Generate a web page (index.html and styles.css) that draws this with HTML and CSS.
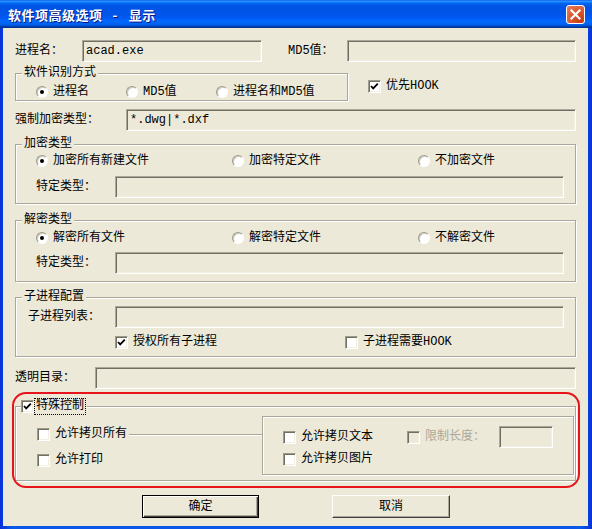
FILE: index.html
```html
<!DOCTYPE html>
<html lang="zh-CN">
<head>
  <meta charset="UTF-8">
  <meta name="viewport" content="width=device-width, initial-scale=1">
  <title>软件项高级选项 - 显示</title>
  <link rel="stylesheet" href="styles.css">
</head>
<body>
  <div class="window">
    <div class="titlebar">
      <span class="title">软件项高级选项<span class="title-sep">-</span>显示</span>
      <button class="close-btn" type="button" aria-label="关闭">
        <svg width="17" height="17" viewBox="0 0 17 17"><path d="M4.5 4.5 L12.5 12.5 M12.5 4.5 L4.5 12.5" stroke="#fff" stroke-width="2.2" stroke-linecap="square"/></svg>
      </button>
    </div>

    <div class="client">
      <div class="row row-proc">
        <label class="lbl w-proc" for="proc">进程名：</label>
        <input class="edit w-proc-edit" id="proc" type="text" value="acad.exe">
        <label class="lbl lbl-md5" for="md5">MD5值：</label>
        <input class="edit grow" id="md5" type="text">
      </div>

      <div class="ident-row">
        <fieldset class="group ident">
          <legend>软件识别方式</legend>
          <div class="group-body ident-body">
            <div class="options">
              <span class="opt w-90"><span class="radio on"></span>进程名</span>
              <span class="opt w-90"><span class="radio"></span>MD5值</span>
              <span class="opt"><span class="radio"></span>进程名和MD5值</span>
            </div>
          </div>
        </fieldset>
        <span class="opt hook"><span class="check"><svg width="11" height="11" viewBox="0 0 11 11"><polyline points="2,5 4.2,7.4 8.8,2.6" fill="none" stroke="#000" stroke-width="1.8"/></svg></span>优先HOOK</span>
      </div>

      <div class="row row-force">
        <label class="lbl w-force" for="force">强制加密类型：</label>
        <input class="edit grow" id="force" type="text" value="*.dwg|*.dxf">
      </div>

      <fieldset class="group enc">
        <legend>加密类型</legend>
        <div class="group-body enc-body">
          <div class="options">
            <span class="opt w-196"><span class="radio on"></span>加密所有新建文件</span>
            <span class="opt w-186"><span class="radio"></span>加密特定文件</span>
            <span class="opt"><span class="radio"></span>不加密文件</span>
          </div>
          <div class="row sub-row enc-sub">
            <label class="lbl w-type">特定类型：</label>
            <input class="edit grow" type="text">
          </div>
        </div>
      </fieldset>

      <fieldset class="group dec">
        <legend>解密类型</legend>
        <div class="group-body dec-body">
          <div class="options">
            <span class="opt w-196"><span class="radio on"></span>解密所有文件</span>
            <span class="opt w-186"><span class="radio"></span>解密特定文件</span>
            <span class="opt"><span class="radio"></span>不解密文件</span>
          </div>
          <div class="row sub-row dec-sub">
            <label class="lbl w-type">特定类型：</label>
            <input class="edit grow" type="text">
          </div>
        </div>
      </fieldset>

      <fieldset class="group child">
        <legend>子进程配置</legend>
        <div class="group-body child-body">
          <div class="row">
            <label class="lbl w-child">子进程列表：</label>
            <input class="edit grow" type="text">
          </div>
          <div class="options child-opts">
            <span class="opt w-230"><span class="check"><svg width="11" height="11" viewBox="0 0 11 11"><polyline points="2,5 4.2,7.4 8.8,2.6" fill="none" stroke="#000" stroke-width="1.8"/></svg></span>授权所有子进程</span>
            <span class="opt"><span class="check"></span>子进程需要HOOK</span>
          </div>
        </div>
      </fieldset>

      <div class="row row-trans">
        <label class="lbl w-trans" for="trans">透明目录：</label>
        <input class="edit grow" id="trans" type="text">
      </div>

      <fieldset class="group special">
        <legend class="check-legend">
          <span class="check"><svg width="11" height="11" viewBox="0 0 11 11"><polyline points="2,5 4.2,7.4 8.8,2.6" fill="none" stroke="#000" stroke-width="1.8"/></svg></span><span class="focus">特殊控制</span>
        </legend>
        <div class="special-body">
          <div class="copy-col">
            <div class="copy-all">
              <span class="opt"><span class="check"></span>允许拷贝所有</span>
              <span class="copy-line"></span>
            </div>
            <span class="opt print"><span class="check"></span>允许打印</span>
          </div>
          <div class="copy-box">
            <div class="row">
              <span class="opt w-124"><span class="check"></span>允许拷贝文本</span>
              <span class="opt w-92 disabled"><span class="check off"></span>限制长度：</span>
              <input class="edit w-len" type="text" disabled>
            </div>
            <div class="options pic-row">
              <span class="opt"><span class="check"></span>允许拷贝图片</span>
            </div>
          </div>
        </div>
      </fieldset>

      <div class="buttons">
        <button class="btn default" type="button">确定</button>
        <button class="btn" type="button">取消</button>
      </div>
    </div>

    <div class="highlight"></div>
  </div>
</body>
</html>
```

FILE: styles.css
```css
body {
  margin: 0;
  font-family: "Liberation Mono", "Noto Sans CJK SC", monospace;
  font-size: 12px;
  line-height: 14px;
  color: #000;
  background: #ece9d8;
}
.window {
  position: relative;
  width: 592px;
  height: 529px;
  box-sizing: border-box;
  display: flex;
  flex-direction: column;
  background: linear-gradient(to right, #0831d9, #0a58e8 2%, #0a58e8 98%, #0831d9);
}
.titlebar {
  flex: none;
  height: 28px;
  display: flex;
  align-items: center;
  padding: 1px 7px 0 8px;
  box-sizing: border-box;
  background: linear-gradient(to bottom, #0058ee 0%, #3593ff 4%, #288eff 6%, #127dff 8%, #036ffc 10%, #0262ee 14%, #0057e5 20%, #0054e3 24%, #0055eb 56%, #005bf5 66%, #026afe 76%, #0062ef 86%, #0052d6 92%, #0040ab 94%, #003092 100%);
}
.title {
  font-family: "Noto Sans CJK SC", sans-serif;
  font-size: 13px;
  font-weight: bold;
  color: #fff;
  text-shadow: 1px 1px 0 #0a1883;
  letter-spacing: 0.5px;
}
.title-sep {
  padding: 0 11px 0 10px;
}
.close-btn {
  margin-left: auto;
  width: 19px;
  height: 19px;
  padding: 0;
  display: flex;
  align-items: center;
  justify-content: center;
  border: 1px solid #fff;
  border-radius: 3px;
  background: radial-gradient(circle at 80% 85%, #c43a12 0, #d9562b 45%, #e5805f 100%);
}
.client {
  flex: 1;
  margin: 0 4px 3px 3px;
  padding: 12px 12px 0 12px;
  background: #ece9d8;
}

/* rows and labels */
.row {
  display: flex;
  align-items: center;
  height: 22px;
}
.lbl {
  flex: none;
  white-space: nowrap;
}
.w-proc { width: 67px; }
.lbl-md5 { width: 59px; margin-left: 26px; }
.w-force { width: 111px; }
.w-type { width: 79px; }
.w-child { width: 87px; }
.w-trans { width: 80px; }
.row-force { margin-top: 8px; }
.row-trans { margin-top: 10px; }

.edit {
  height: 22px;
  box-sizing: border-box;
  margin: 0;
  padding: 0 3px;
  font: inherit;
  color: #000;
  background: #ece9d8;
  border: 1px solid;
  border-color: #aca899 #fff #fff #aca899;
  box-shadow: inset 1px 1px 0 #716f64, inset -1px -1px 0 #f1efe2;
  outline: none;
}
.grow { flex: 1; min-width: 0; }
.w-proc-edit { width: 180px; flex: none; }
.w-len { width: 54px; flex: none; }

/* group boxes */
.group {
  margin: 0;
  padding: 0;
  min-width: 0;
  border: 1px solid #aca899;
  box-shadow: inset 1px 1px 0 #fff, 1px 1px 0 #fff;
}
.group legend {
  margin-left: 6px;
  padding: 0 2px;
  line-height: 15px;
  background: #ece9d8;
}
.ident-row {
  display: flex;
  align-items: flex-start;
  margin-top: 4px;
}
.ident { width: 333px; box-sizing: border-box; flex: none; }
.ident-body { padding: 4px 0 1px 20px; }
.hook { margin: 13px 0 0 20px; }

.enc { margin-top: 6px; }
.enc-body { padding: 2px 11px 5px 20px; }
.enc-sub { margin-top: 8px; }
.dec { margin-top: 9px; }
.dec-body { padding: 3px 11px 7px 20px; }
.dec-sub { margin-top: 7px; }
.child { margin-top: 8px; }
.child-body { padding: 1px 11px 7px 12px; }
.child-opts { margin: 7px 0 0 87px; }

/* radio and check */
.options {
  display: flex;
  align-items: center;
  height: 14px;
}
.opt {
  display: inline-flex;
  align-items: center;
  gap: 5px;
  white-space: nowrap;
  flex: none;
}
.w-90 { width: 90px; }
.w-196 { width: 196px; }
.w-186 { width: 186px; }
.w-230 { width: 230px; }
.w-124 { width: 124px; }
.w-92 { width: 92px; }
.radio {
  position: relative;
  width: 12px;
  height: 12px;
  box-sizing: border-box;
  border-radius: 50%;
  border: 1px solid;
  border-color: #9d9a8c #fff #fff #9d9a8c;
  background: #fff;
  box-shadow: inset 1px 1px 0 #cfccbd;
}
.radio.on::after {
  content: "";
  position: absolute;
  left: 3px;
  top: 3px;
  width: 4px;
  height: 4px;
  border-radius: 50%;
  background: #000;
}
.check {
  width: 13px;
  height: 13px;
  box-sizing: border-box;
  flex: none;
  border: 1px solid;
  border-color: #9d9a8c #fff #fff #9d9a8c;
  background: #fff;
  box-shadow: inset 1px 1px 0 #716f64, inset -1px -1px 0 #f1efe2;
  display: flex;
}
.check.off {
  background: #ece9d8;
}
.disabled { color: #aca899; }

/* special control */
.special { margin-top: 10px; }
.group .check-legend {
  margin-left: 5px;
  padding: 0 2px 0 0;
  display: flex;
  align-items: center;
  gap: 1px;
}
.focus {
  padding: 0 1px;
  outline: 1px dotted #000;
  outline-offset: 0;
}
.special-body {
  display: flex;
  padding: 2px 1px 5px 21px;
}
.copy-col {
  width: 225px;
  flex: none;
  padding-top: 11px;
}
.copy-all {
  display: flex;
  align-items: center;
  height: 14px;
}
.copy-line {
  flex: 1;
  margin: 2px 0 0 2px;
  border-top: 1px solid #aca899;
  border-bottom: 1px solid #fff;
}
.print { margin-top: 12px; }
.copy-box {
  flex: 1;
  padding: 9px 0 8px 20px;
  border: 1px solid #aca899;
  box-shadow: inset 1px 1px 0 #fff, 1px 1px 0 #fff;
}
.pic-row { margin-top: 4px; }

/* buttons */
.buttons {
  display: flex;
  gap: 73px;
  margin-top: 14px;
  padding-left: 127px;
}
.btn {
  width: 118px;
  height: 23px;
  padding: 0;
  font: inherit;
  color: #000;
  background: #ece9d8;
  border: 1px solid;
  border-color: #fff #404040 #404040 #fff;
  box-shadow: inset -1px -1px 0 #aca899;
}
.btn.default {
  width: 117px;
  border-color: #000;
  box-shadow: inset 1px 1px 0 #fff, inset -1px -1px 0 #404040, inset -2px -2px 0 #aca899;
}

/* red annotation */
.highlight {
  position: absolute;
  left: 12px;
  top: 392px;
  width: 568px;
  height: 96px;
  box-sizing: border-box;
  border: 2px solid #e8141b;
  border-radius: 14px;
  pointer-events: none;
}
```
